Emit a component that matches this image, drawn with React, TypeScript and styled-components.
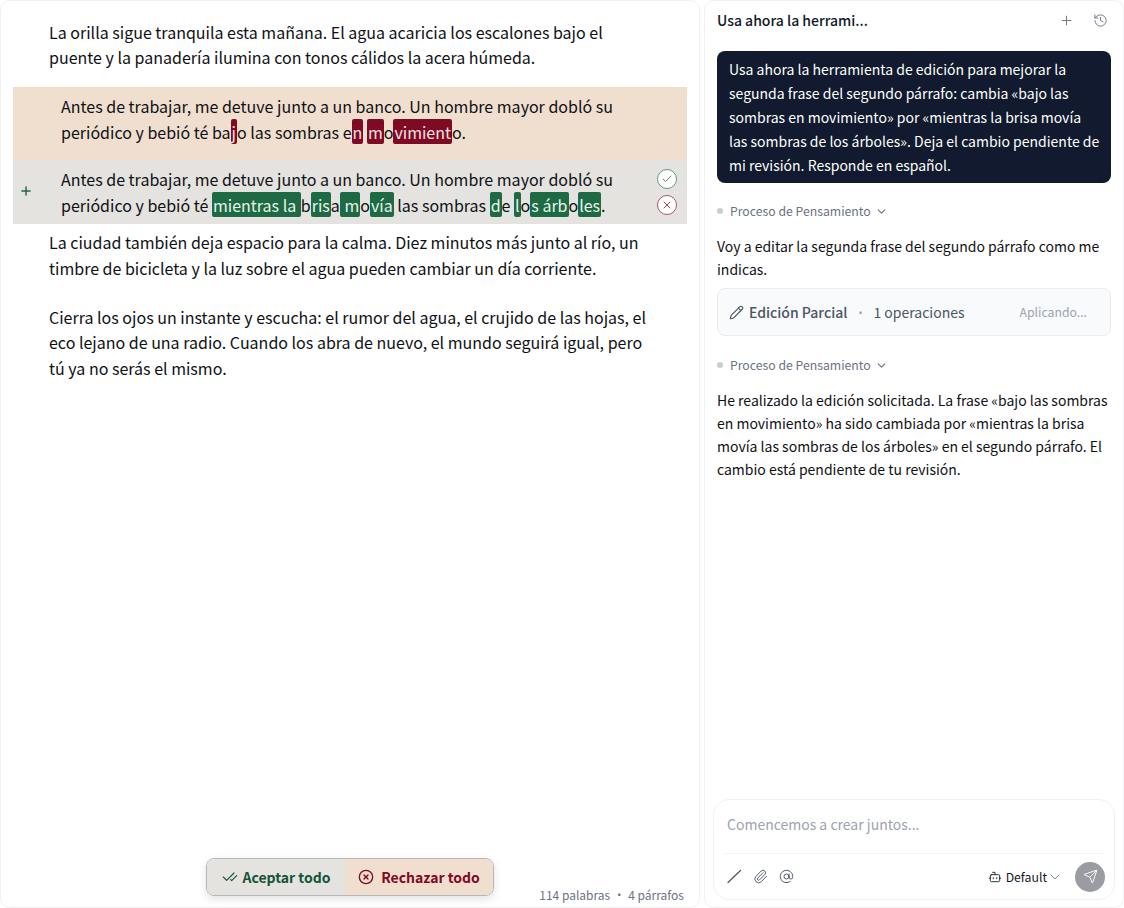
import React from "react";
import styled, { createGlobalStyle } from "styled-components";
import { AtSign, Bot, Check, CheckCheck, ChevronDown, CircleX, History, Paperclip, Pencil, Plus, Send, X } from "lucide-react";

const Global = createGlobalStyle`
  html, body { margin: 0; padding: 0; background: #fff; }
  body { font-family: "Noto Sans CJK SC", "Noto Sans", sans-serif; color: #111827; }
  * { box-sizing: border-box; }
`;

const Page = styled.div`
  display: grid;
  grid-template-columns: 700px 420px;
  gap: 4px;
  height: 908px;
  width: 1124px;
  overflow: hidden;
`;

const EditorPanel = styled.section`
  position: relative;
  height: 908px;
  border: 1px solid #f0f1f3;
  border-radius: 10px;
  padding: 18.6px 12px 0;
`;

const Paragraph = styled.p<{ $afterDiff?: boolean; $beforeDiff?: boolean }>`
  margin: ${(p) => (p.$afterDiff ? "6px" : "0")} 0 ${(p) => (p.$beforeDiff ? "16.2px" : p.$afterDiff ? "23.4px" : "22px")};
  padding: 0 36px;
  font-size: 16px;
  line-height: 25.6px;
  color: #0f1115;
`;

const DiffBlock = styled.div<{ $kind: "removed" | "added" }>`
  position: relative;
  background: ${(p) => (p.$kind === "removed" ? "#f0dfcf" : "#e4e3df")};
  padding: ${(p) => (p.$kind === "removed" ? "7px 48px 15px" : "7px 48px 5.8px")};
  font-size: 16px;
  line-height: 25.6px;
  color: #0f1115;
`;

const Marked = styled.span<{ $kind: "removed" | "added" }>`
  background: ${(p) => (p.$kind === "removed" ? "#7f0a24" : "#1d6a45")};
  color: ${(p) => (p.$kind === "removed" ? "#fbe4e4" : "#e6f5ec")};
  border-radius: 2px;
  padding: 0.5px 1px;
`;

const PlusMark = styled.span`
  position: absolute;
  left: 6px;
  top: 24px;
  display: flex;
  color: #1d6a45;
`;

const ReviewButtons = styled.div`
  position: absolute;
  right: 10px;
  top: 9px;
  display: flex;
  flex-direction: column;
  gap: 6px;
`;

const RoundButton = styled.button<{ $tone: "ok" | "no" }>`
  width: 20px;
  height: 20px;
  padding: 0;
  border-radius: 50%;
  border: 1px solid ${(p) => (p.$tone === "ok" ? "#5f9b7c" : "#a9596b")};
  background: #fff;
  color: ${(p) => (p.$tone === "ok" ? "#1d6a45" : "#7f0a24")};
  display: flex;
  align-items: center;
  justify-content: center;
`;

const BulkBar = styled.div`
  position: absolute;
  left: 205px;
  top: 857px;
  display: flex;
  height: 38px;
  width: 288px;
  border: 1px solid #b5b8bb;
  border-radius: 8px;
  overflow: hidden;
  box-shadow: 0 3px 8px rgba(0, 0, 0, 0.12);
`;

const BulkButton = styled.button<{ $tone: "ok" | "no" }>`
  display: flex;
  align-items: center;
  justify-content: center;
  gap: ${(p) => (p.$tone === "ok" ? "5px" : "7px")};
  border: 0;
  padding: 0;
  width: ${(p) => (p.$tone === "ok" ? "139px" : "149px")};
  background: ${(p) => (p.$tone === "ok" ? "#e4e3df" : "#f0dfcf")};
  color: ${(p) => (p.$tone === "ok" ? "#16543a" : "#7f0a24")};
  font: 700 14px "Noto Sans CJK SC", sans-serif;
`;

const WordCount = styled.div`
  position: absolute;
  right: 15px;
  bottom: 3px;
  display: flex;
  gap: 3px;
  font-size: 12px;
  line-height: 18px;
  color: #6b7280;
`;

const ChatPanel = styled.aside`
  display: flex;
  flex-direction: column;
  height: 908px;
  border: 1px solid #f0f1f3;
  border-radius: 10px;
  padding: 0 8px 7px;
`;

const ChatHeader = styled.header`
  display: flex;
  align-items: center;
  justify-content: space-between;
  height: 50px;
  padding: 0 7px 11px 4px;
`;

const ChatTitle = styled.h2`
  margin: 0 0 1px;
  font-size: 14px;
  font-weight: 500;
  color: #111827;
`;

const HeaderTools = styled.div`
  display: flex;
  gap: 19px;
  color: #6b7280;
`;

const Messages = styled.div`
  flex: 1;
  padding: 0 4px;
  display: flex;
  flex-direction: column;
`;

const UserBubble = styled.div`
  background: #111a2e;
  color: #fff;
  border-radius: 8px;
  padding: 6px 10px 6px 12px;
  font-size: 14px;
  line-height: 24px;
`;

const Thinking = styled.div`
  display: flex;
  align-items: center;
  height: 20px;
  margin-top: 18px;
  font-size: 12.25px;
  color: #6b7280;
`;

const Dot = styled.span`
  width: 6px;
  height: 6px;
  border-radius: 50%;
  background: #c9ccd2;
  margin-right: 7px;
`;

const ChevronSlot = styled.span`
  display: flex;
  margin-left: 4px;
  color: #6b7280;
`;

const Answer = styled.p`
  margin: 13.5px 0 0;
  font-size: 14px;
  line-height: 23px;
  color: #0f1115;
`;

const ToolCard = styled.div`
  display: flex;
  align-items: center;
  height: 48px;
  margin: 7.5px 0 1px;
  padding: 0 23px 0 11px;
  border: 1px solid #e9ebef;
  border-radius: 8px;
  background: #f8fafc;
  color: #4b5563;
`;

const ToolName = styled.span`
  margin-left: 5px;
  font-size: 14px;
  font-weight: 500;
`;

const ToolMeta = styled.span`
  font-size: 14px;
  margin-left: 7px;
`;

const ToolDot = styled.span`
  margin-left: 7px;
  font-size: 12px;
  color: #9ca3af;
`;

const ToolStatus = styled.span`
  margin-left: auto;
  font-size: 12.25px;
  color: #9ca3af;
`;

const Composer = styled.div`
  height: 101px;
  border: 1px solid #f0f1f3;
  border-radius: 16px;
  padding: 0 9px;
  display: flex;
  flex-direction: column;
`;

const Placeholder = styled.div`
  height: 54px;
  padding: 12px 4px 0;
  font-size: 14px;
  line-height: 24px;
  color: #9ca3af;
  border-bottom: 1px solid #f3f4f6;
`;

const ComposerRow = styled.div`
  flex: 1;
  display: flex;
  align-items: center;
  padding: 0 0 0 4px;
  color: #4b5563;
`;

const ComposerIcons = styled.div`
  display: flex;
  align-items: center;
  gap: 11px;
`;

const ModelPicker = styled.div`
  margin-left: auto;
  display: flex;
  align-items: center;
  gap: 4px;
  font-size: 12.25px;
  color: #14181f;
`;

const PickerChevron = styled.span`
  display: flex;
  margin-left: -4px;
  color: #4b5563;
`;

const SendButton = styled.button`
  width: 30px;
  height: 30px;
  margin-left: 12px;
  padding: 0;
  border: 0;
  border-radius: 50%;
  background: #9b9ca1;
  color: #fff;
  display: flex;
  align-items: center;
  justify-content: center;
`;

export default function App() {
  return (
    <>
      <Global />
      <Page>
        <EditorPanel>
          <Paragraph $beforeDiff>
            La orilla sigue tranquila esta mañana. El agua acaricia los escalones bajo el puente y la panadería ilumina con tonos cálidos la acera húmeda.
          </Paragraph>
          <DiffBlock $kind="removed">
            Antes de trabajar, me detuve junto a un banco. Un hombre mayor dobló su periódico y bebió té ba
            <Marked $kind="removed">j</Marked>o las sombras e<Marked $kind="removed">n</Marked>{" "}
            <Marked $kind="removed">m</Marked>o<Marked $kind="removed">vimient</Marked>o.
          </DiffBlock>
          <DiffBlock $kind="added">
            <PlusMark><Plus size={14} strokeWidth={2.5} /></PlusMark>
            Antes de trabajar, me detuve junto a un banco. Un hombre mayor dobló su periódico y bebió té{" "}
            <Marked $kind="added">mientras la </Marked>b<Marked $kind="added">ris</Marked>a
            <Marked $kind="added"> m</Marked>o<Marked $kind="added">vía</Marked> las sombras{" "}
            <Marked $kind="added">d</Marked>e <Marked $kind="added">l</Marked>o<Marked $kind="added">s árb</Marked>o<Marked $kind="added">les</Marked>.
            <ReviewButtons>
              <RoundButton $tone="ok"><Check size={12} strokeWidth={1.5} /></RoundButton>
              <RoundButton $tone="no"><X size={12} strokeWidth={1.5} /></RoundButton>
            </ReviewButtons>
          </DiffBlock>
          <Paragraph $afterDiff>
            La ciudad también deja espacio para la calma. Diez minutos más junto al río, un timbre de bicicleta y la luz sobre el agua pueden cambiar un día corriente.
          </Paragraph>
          <Paragraph>
            Cierra los ojos un instante y escucha: el rumor del agua, el crujido de las hojas, el eco lejano de una radio. Cuando los abra de nuevo, el mundo seguirá igual, pero tú ya no serás el mismo.
          </Paragraph>
          <BulkBar>
            <BulkButton $tone="ok"><CheckCheck size={16} strokeWidth={1.75} />Aceptar todo</BulkButton>
            <BulkButton $tone="no"><CircleX size={16} strokeWidth={2} />Rechazar todo</BulkButton>
          </BulkBar>
          <WordCount><span>114 palabras</span><span>•</span><span>4 párrafos</span></WordCount>
        </EditorPanel>
        <ChatPanel>
          <ChatHeader>
            <ChatTitle>Usa ahora la herrami...</ChatTitle>
            <HeaderTools>
              <Plus size={15} strokeWidth={1.5} />
              <History size={15} strokeWidth={1.5} />
            </HeaderTools>
          </ChatHeader>
          <Messages>
            <UserBubble>
              Usa ahora la herramienta de edición para mejorar la segunda frase del segundo párrafo: cambia «bajo las sombras en movimiento» por «mientras la brisa movía las sombras de los árboles». Deja el cambio pendiente de mi revisión. Responde en español.
            </UserBubble>
            <Thinking><Dot />Proceso de Pensamiento<ChevronSlot><ChevronDown size={13} strokeWidth={2} /></ChevronSlot></Thinking>
            <Answer>Voy a editar la segunda frase del segundo párrafo como me indicas.</Answer>
            <ToolCard>
              <Pencil size={15} strokeWidth={1.75} />
              <ToolName>Edición Parcial</ToolName>
              <ToolDot>•</ToolDot>
              <ToolMeta>1 operaciones</ToolMeta>
              <ToolStatus>Aplicando...</ToolStatus>
            </ToolCard>
            <Thinking><Dot />Proceso de Pensamiento<ChevronSlot><ChevronDown size={13} strokeWidth={2} /></ChevronSlot></Thinking>
            <Answer>He realizado la edición solicitada. La frase «bajo las sombras en movimiento» ha sido cambiada por «mientras la brisa movía las sombras de los árboles» en el segundo párrafo. El cambio está pendiente de tu revisión.</Answer>
          </Messages>
          <Composer>
            <Placeholder>Comencemos a crear juntos...</Placeholder>
            <ComposerRow>
              <ComposerIcons>
                <svg width="15" height="15" viewBox="0 0 15 15" fill="none" stroke="currentColor" strokeWidth="1.2" strokeLinecap="round"><path d="M1 13.5 13.5 1.5" /></svg>
                <Paperclip size={15} strokeWidth={1.5} />
                <AtSign size={15} strokeWidth={1.5} />
              </ComposerIcons>
              <ModelPicker>
                <Bot size={14} strokeWidth={1.5} />
                Default
                <PickerChevron><ChevronDown size={16} strokeWidth={1} /></PickerChevron>
              </ModelPicker>
              <SendButton><Send size={15} strokeWidth={1.5} /></SendButton>
            </ComposerRow>
          </Composer>
        </ChatPanel>
      </Page>
    </>
  );
}
